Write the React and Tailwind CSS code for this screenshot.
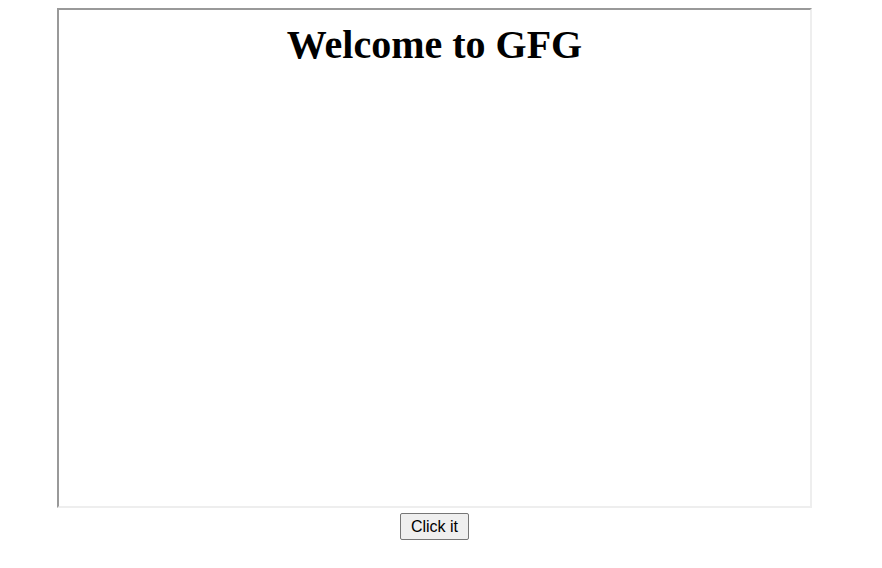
export default function App() {
  return (
    <div className="ml-[57px] mt-[8px] w-[755px]">
      <div className="h-[500px] border-2 border-t-[#999999] border-l-[#999999] border-r-[#eeeeee] border-b-[#eeeeee] bg-white pt-[13px]">
        <h1 className="text-center font-['Liberation_Serif',serif] text-[40px] font-bold leading-[44px] text-black">
          Welcome to GFG
        </h1>
      </div>
      <div className="mt-[5px] text-center">
        <button className="rounded-[2px] border border-[#767676] bg-[#efefef] px-[10px] py-[3px] font-['Liberation_Sans',Arial,sans-serif] text-[16px] leading-[19px] text-black">
          Click it
        </button>
      </div>
    </div>
  );
}
